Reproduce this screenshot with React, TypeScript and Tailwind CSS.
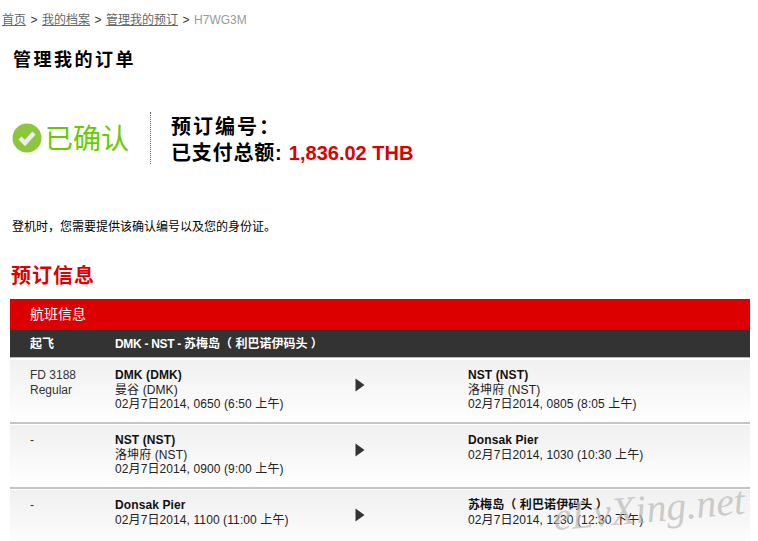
const SANS = "font-['Liberation_Sans','Noto_Sans_CJK_SC',sans-serif]";

type Leg = {
  flight: string[];
  from: { name: string; city?: string; time: string };
  to: { name: string; city?: string; time: string };
};

const legs: Leg[] = [
  {
    flight: ["FD 3188", "Regular"],
    from: { name: "DMK (DMK)", city: "曼谷 (DMK)", time: "02月7日2014, 0650 (6:50 上午)" },
    to: { name: "NST (NST)", city: "洛坤府 (NST)", time: "02月7日2014, 0805 (8:05 上午)" },
  },
  {
    flight: ["-"],
    from: { name: "NST (NST)", city: "洛坤府 (NST)", time: "02月7日2014, 0900 (9:00 上午)" },
    to: { name: "Donsak Pier", time: "02月7日2014, 1030 (10:30 上午)" },
  },
  {
    flight: ["-"],
    from: { name: "Donsak Pier", time: "02月7日2014, 1100 (11:00 上午)" },
    to: { name: "苏梅岛（ 利巴诺伊码头 ）", time: "02月7日2014, 1230 (12:30 下午)" },
  },
];

function Stop({ stop }: { stop: Leg["from"] }) {
  return (
    <div className="text-[12px] leading-[14.5px] tracking-[0.1px] text-[#222]">
      <div className="font-bold text-[#111]">{stop.name}</div>
      {stop.city && <div>{stop.city}</div>}
      <div>{stop.time}</div>
    </div>
  );
}

function LegRow({ leg }: { leg: Leg }) {
  return (
    <div className="border-t-2 border-[#c4c4c4] pt-px first:border-t-0 first:pt-0">
      <div className="flex h-[62px] bg-gradient-to-b from-[#f0f0f0] to-white pt-[8px]">
        <div className="w-[105px] pl-5 text-[12px] leading-[15px] text-[#333]">
          {leg.flight.map((line) => (
            <div key={line}>{line}</div>
          ))}
        </div>
        <div className="w-[240px]">
          <Stop stop={leg.from} />
        </div>
        <div className="w-[113px] pt-[10px]">
          <svg width="10" height="14" viewBox="0 0 10 14" className="block">
            <path d="M0.5 0.5 L9.5 7 L0.5 13.5 Z" fill="#333" />
          </svg>
        </div>
        <Stop stop={leg.to} />
      </div>
    </div>
  );
}

export default function App() {
  return (
    <div className={`relative h-[541px] w-[758px] overflow-hidden bg-white ${SANS}`}>
      <div className="flex items-center pl-[2px] pt-[13px] text-[12px] leading-[15px] text-[#666]">
        <span className="underline">首页</span>
        <span className="mx-[4.5px] text-[#333]">&gt;</span>
        <span className="underline">我的档案</span>
        <span className="mx-[4.5px] text-[#333]">&gt;</span>
        <span className="underline">管理我的预订</span>
        <span className="mx-[4.5px] text-[#333]">&gt;</span>
        <span className="text-[#999]">H7WG3M</span>
      </div>

      <h1 className="pl-[13px] pt-[20px] text-[18px] font-bold leading-[24px] tracking-[2.5px] text-black">
        管理我的订单
      </h1>

      <div className="mt-[40px] flex h-[52px] pl-[12px]">
        <div className="flex w-[138px] items-center">
          <svg width="30" height="30" viewBox="0 0 30 30" className="shrink-0">
            <circle cx="15" cy="15" r="14.5" fill="#8cc63f" />
            <path d="M8 15 L13 20 L22 10" fill="none" stroke="#ececec" strokeWidth="4.5" />
          </svg>
          <span className="ml-[3px] mt-[4px] text-[28px] leading-[34px] text-[#66cc00]">已确认</span>
        </div>
        <div className="border-l border-dotted border-[#666]" />
        <div className="pl-[20px] pt-[2px] text-[20px] font-bold leading-[26px] text-black">
          <div className="tracking-[2px]">预订编号：</div>
          <div>
            <span className="tracking-[0.8px]">已支付总额: </span>
            <span className="text-[#dd0000]">1,836.02 THB</span>
          </div>
        </div>
      </div>

      <p className="pl-[12px] pt-[55px] text-[12px] leading-[16px] text-black">
        登机时，您需要提供该确认编号以及您的身份证。
      </p>

      <h2 className="pl-[11px] pt-[28px] text-[20px] font-bold leading-[26px] tracking-[1px] text-[#dd0000]">
        预订信息
      </h2>

      <div className="ml-[10px] mt-[10px] w-[740px]">
        <div className="flex h-[31px] items-center bg-[#dd0000] pl-5 text-[14px] text-white">航班信息</div>
        <div className="flex h-[27px] items-center bg-[#333] text-[12px] font-bold text-white">
          <div className="w-[105px] pl-5">起飞</div>
          <div>
            <span className="tracking-[-0.3px]">DMK - NST - </span>
            苏梅岛（ 利巴诺伊码头 ）
          </div>
        </div>
        <div className="mb-[2px] border-t border-[#bbb]" />
        <div>
          {legs.map((leg) => (
            <LegRow key={leg.from.time} leg={leg} />
          ))}
        </div>
      </div>

      <div className="absolute left-[553px] top-[486px] -rotate-[5deg] font-['Liberation_Serif',serif] text-[40px] italic leading-[46px] text-[#b8b8b8]/70">
        eLvXing.net
      </div>
    </div>
  );
}
